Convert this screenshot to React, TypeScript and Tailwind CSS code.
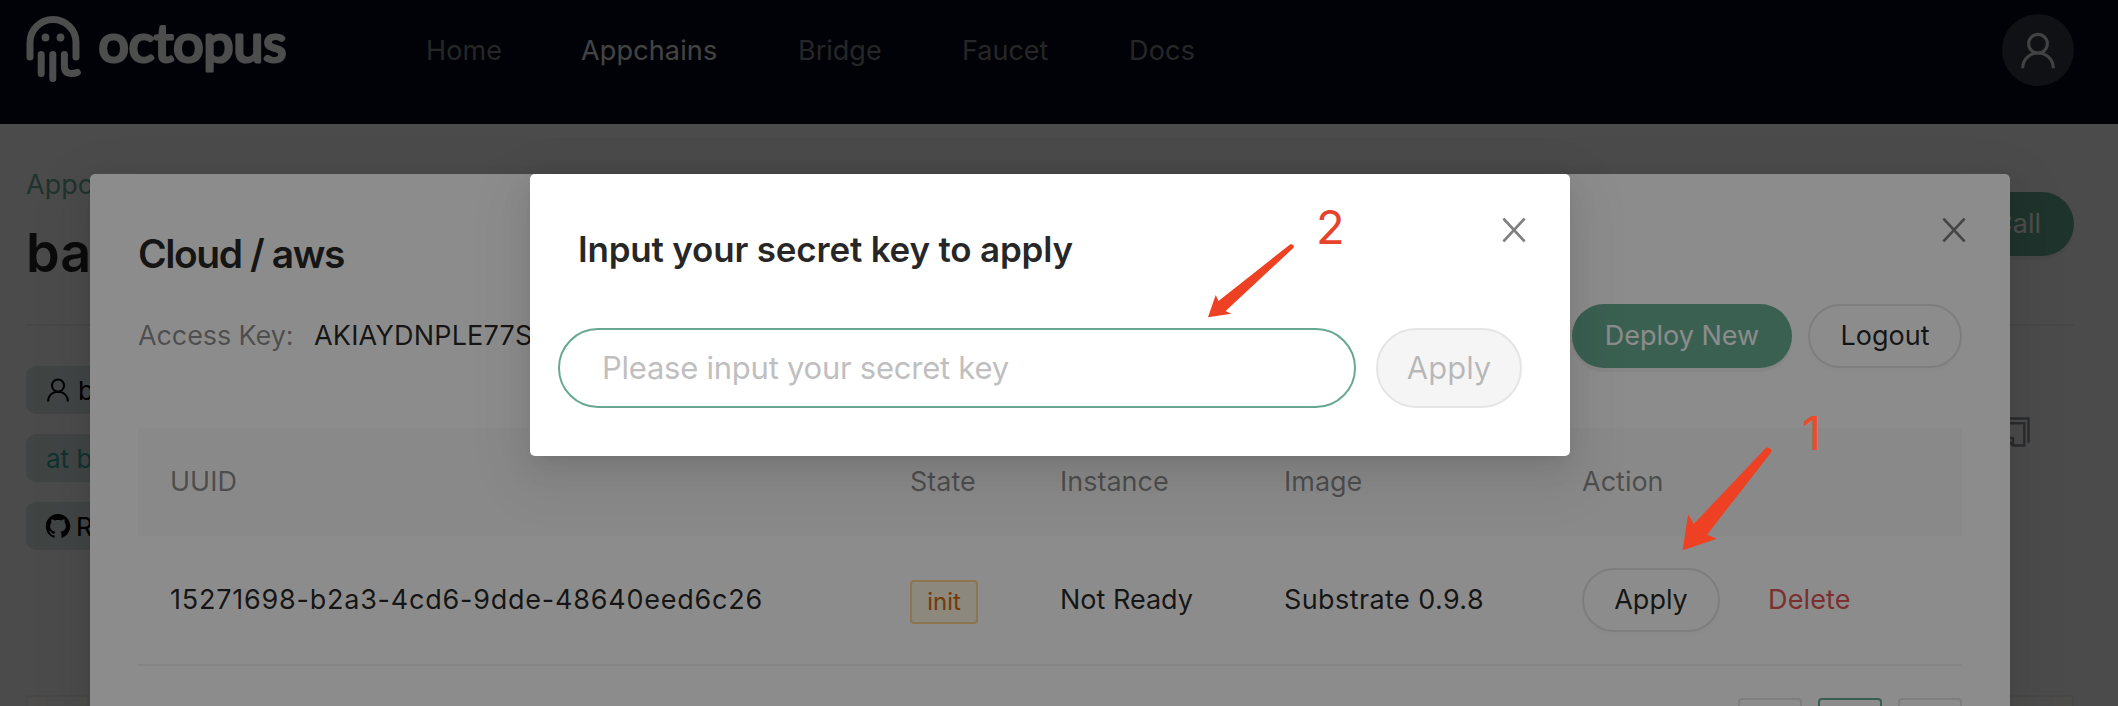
import type { ReactNode } from "react";
import { AiFillGithub } from "react-icons/ai";

const UserGlyph = ({ className }: { className: string }) => (
  <svg viewBox="0 0 36 38" fill="none" stroke="currentColor" strokeWidth="3.2" className={className}>
    <circle cx="18" cy="12" r="9.6" />
    <path d="M2.3 37.3C2.3 28 9.2 21.6 18 21.6S33.7 28 33.7 37.3" />
  </svg>
);

const Cross = () => (
  <svg viewBox="0 0 24 24" className="h-6 w-6 text-black/50" stroke="currentColor" strokeWidth="2.6" fill="none">
    <path d="M1.4 0.5L22.6 23.5M22.6 0.5L1.4 23.5" />
  </svg>
);

const Logo = () => (
  <svg viewBox="0 0 264 86" className="h-[86px] w-[264px] overflow-visible text-white">
    <g fill="none" stroke="currentColor" strokeWidth="7" strokeLinecap="round">
      <path d="M4 45V30.5a23 23 0 0 1 46 0V45" />
      <path d="M15.2 42.5V61.5M26.8 42.5V66.5M38.4 42.5V54Q38.4 61.5 45.5 61.5Q49 61.5 51.3 60.3" />
    </g>
    <g fill="currentColor">
      <circle cx="19.5" cy="25.5" r="3.9" />
      <circle cx="34.5" cy="25.5" r="3.9" />
      <text
        x="72.5"
        y="50"
        textLength="188"
        lengthAdjust="spacingAndGlyphs"
        stroke="currentColor"
        strokeWidth="3.2"
        strokeLinejoin="round"
        className="font-['Lato',sans-serif] text-[53px] font-normal"
      >
        octopus
      </text>
    </g>
  </svg>
);

const Tag = ({ children, className }: { children: ReactNode; className: string }) => (
  <div className={`flex h-12 w-[300px] items-center gap-2 rounded-[10px] bg-[#d6e4e2] pl-5 text-[26px] ${className}`}>
    {children}
  </div>
);

const Page = () => (
  <div className="h-full bg-[#f9fafb]">
    <header className="flex h-[124px] items-start bg-[#040818] pr-11 pl-[26px]">
      <div className="flex h-[98px] pt-3">
        <Logo />
      </div>
      <nav className="flex h-[102px] flex-1 items-center gap-20 pl-[136px] text-[27px] text-[#7e8087]">
        <span className="w-[75px] tracking-[0.15px]">Home</span>
        <span className="w-[137px] tracking-[0.15px] text-[#e0e1e4]">Appchains</span>
        <span className="w-[84px]">Bridge</span>
        <span className="w-[87px]">Faucet</span>
        <span className="tracking-[0.2px]">Docs</span>
      </nav>
      <div className="mt-3.5 flex h-[72px] w-[72px] items-center justify-center rounded-full bg-[#383a45]">
        <UserGlyph className="h-[37px] w-9 text-[#dcdce0]" />
      </div>
    </header>
    <main className="px-[26px] pr-11">
      <div className="flex h-[202px] justify-between border-b-2 border-[#e9ebec]">
        <div className="flex flex-col pt-[41px]">
          <span className="text-[27px] leading-[40px] text-[#6aa993]">Appc</span>
          <span className="mt-[14px] text-[54px] leading-[68px] font-semibold text-black/85">ba</span>
        </div>
        <div className="mt-[68px] flex h-16 items-center rounded-full bg-[#67ac92] px-[33px] text-[27px] text-white shadow-[0_4px_0_rgba(0,0,0,0.045)]">
          Call
        </div>
      </div>
      <div className="flex justify-between">
        <div className="flex flex-col gap-5 pt-10">
          <Tag className="text-black">
            <UserGlyph className="h-6 w-6" />b
          </Tag>
          <Tag className="text-[#38a89f]">at b</Tag>
          <Tag className="text-black">
            <AiFillGithub className="-ml-0.5 h-7 w-7" />
            <span className="-ml-1">R</span>
          </Tag>
        </div>
        <svg viewBox="0 0 28 30" className="mt-[91px] mr-11 h-[30px] w-7 text-[#8d9094]" fill="none" stroke="currentColor" strokeWidth="2.4">
          <path d="M7 1.5H26.5V26" />
          <path d="M3 6.2H22.3V28.5H11L3 21zM3 21H11V28.5" />
        </svg>
      </div>
      <div className="mt-[145px] h-40 border-2 border-[#eeeeee] bg-[#fdfbf9]" />
    </main>
  </div>
);

const cols = "grid grid-cols-[740px_150px_224px_298px_412px] items-center [&>*]:pl-8";
const outlined =
  "flex h-16 items-center justify-center rounded-full border-2 border-[#e5e5e5] bg-white text-black/85 shadow-[0_4px_0_rgba(0,0,0,0.015)]";
const modalShadow =
  "shadow-[0_6px_12px_-8px_rgba(0,0,0,0.12),0_12px_32px_0_rgba(0,0,0,0.08),0_18px_56px_16px_rgba(0,0,0,0.05)]";

const CloudModal = () => (
  <section className={`relative h-[700px] w-[1920px] rounded-[5px] bg-white px-12 text-[27px] text-black/85 ${modalShadow}`}>
    <div className="absolute top-11 right-11">
      <Cross />
    </div>
    <h2 className="pt-[50px] text-[39px] leading-[60px] font-semibold tracking-[-1.45px]">Cloud / aws</h2>
    <div className="mt-5 flex h-16 items-center">
      <span className="w-[176px] tracking-[-0.1px] text-black/45">Access Key:</span>
      <span className="tracking-[0.2px]">AKIAYDNPLE77S</span>
      <div className="ml-auto flex gap-4">
        <div className="flex h-16 w-[220px] items-center justify-center rounded-full bg-[#6ab096] text-white shadow-[0_4px_0_rgba(0,0,0,0.045)]">
          Deploy New
        </div>
        <div className={`w-[154px] ${outlined}`}>Logout</div>
      </div>
    </div>
    <div className={`mt-[60px] h-[108px] rounded-t bg-[#fafafa] text-black/45 ${cols}`}>
      <span>UUID</span>
      <span>State</span>
      <span>Instance</span>
      <span>Image</span>
      <span>Action</span>
    </div>
    <div className={`h-[130px] border-b-2 border-[#f0f0f0] ${cols}`}>
      <span className="tracking-[0.77px]">15271698-b2a3-4cd6-9dde-48640eed6c26</span>
      <div className="pt-1">
        <span className="flex h-11 w-[68px] items-center justify-center rounded border-2 border-[#ffd591] bg-[#fff7e6] text-[24px] text-[#d46b08]">
          init
        </span>
      </div>
      <span>Not Ready</span>
      <span className="tracking-[0.4px]">Substrate 0.9.8</span>
      <div className="flex items-center gap-12">
        <div className={`w-[138px] ${outlined}`}>Apply</div>
        <span className="tracking-[0.15px] text-[#e05656]">Delete</span>
      </div>
    </div>
    <div className="mt-8 flex justify-end gap-4">
      <div className="h-16 w-16 rounded border-2 border-[#e5e5e5]" />
      <div className="h-16 w-16 rounded border-2 border-[#67ac92]" />
      <div className="h-16 w-16 rounded border-2 border-[#e5e5e5]" />
    </div>
  </section>
);

const SecretModal = () => (
  <section className={`relative h-[282px] w-[1040px] rounded-[5px] bg-white pr-12 pl-7 ${modalShadow}`}>
    <div className="absolute top-11 right-11">
      <Cross />
    </div>
    <h2 className="pt-[48px] pl-5 text-[35px] leading-[54px] font-semibold tracking-[-0.2px] text-black/85">
      Input your secret key to apply
    </h2>
    <div className="mt-[52px] flex justify-between">
      <div className="flex h-20 w-[798px] items-center rounded-full border-2 border-[#67a893] pl-[42px] text-[31px] tracking-[-0.25px] text-[#bfbfbf]">
        Please input your secret key
      </div>
      <div className="flex h-20 w-[146px] items-center justify-center rounded-full border-2 border-[#e5e5e5] bg-[#f5f5f5] text-[31px] text-black/25">
        Apply
      </div>
    </div>
  </section>
);

export default function App() {
  return (
    <div className="relative h-[706px] w-full overflow-hidden font-['Inter',sans-serif]">
      <Page />
      <div className="absolute inset-0 flex items-start justify-center overflow-hidden bg-black/45 pt-[174px]">
        <div className="-ml-[18px]">
          <CloudModal />
        </div>
      </div>
      <div className="absolute inset-0 flex items-start justify-center overflow-hidden bg-black/45 pt-[174px]">
        <div className="-ml-[18px]">
          <SecretModal />
        </div>
      </div>
      <svg viewBox="0 0 2118 706" className="absolute inset-0 h-full w-full text-[#ee4023]" fill="currentColor">
        <path d="M1208 317.3L1215.7 295L1218.5 301L1290 244.4Q1293 243.6 1294 246.3L1293.3 248L1225.6 311L1231.3 313.7Z" />
        <path d="M1682.6 550.3L1688.2 514.3L1693.7 524L1765.6 448.2Q1768.5 446.3 1771 449.5Q1772 451 1771 452.5L1707 534.7L1717 538.7Z" />
      </svg>
      <span className="absolute top-[197px] left-[1316px] text-[47px] leading-[60px] text-[#e5432c]">2</span>
      <span className="absolute top-[403px] left-[1802px] text-[47px] leading-[60px] text-[#ee4a2c]">1</span>
    </div>
  );
}
